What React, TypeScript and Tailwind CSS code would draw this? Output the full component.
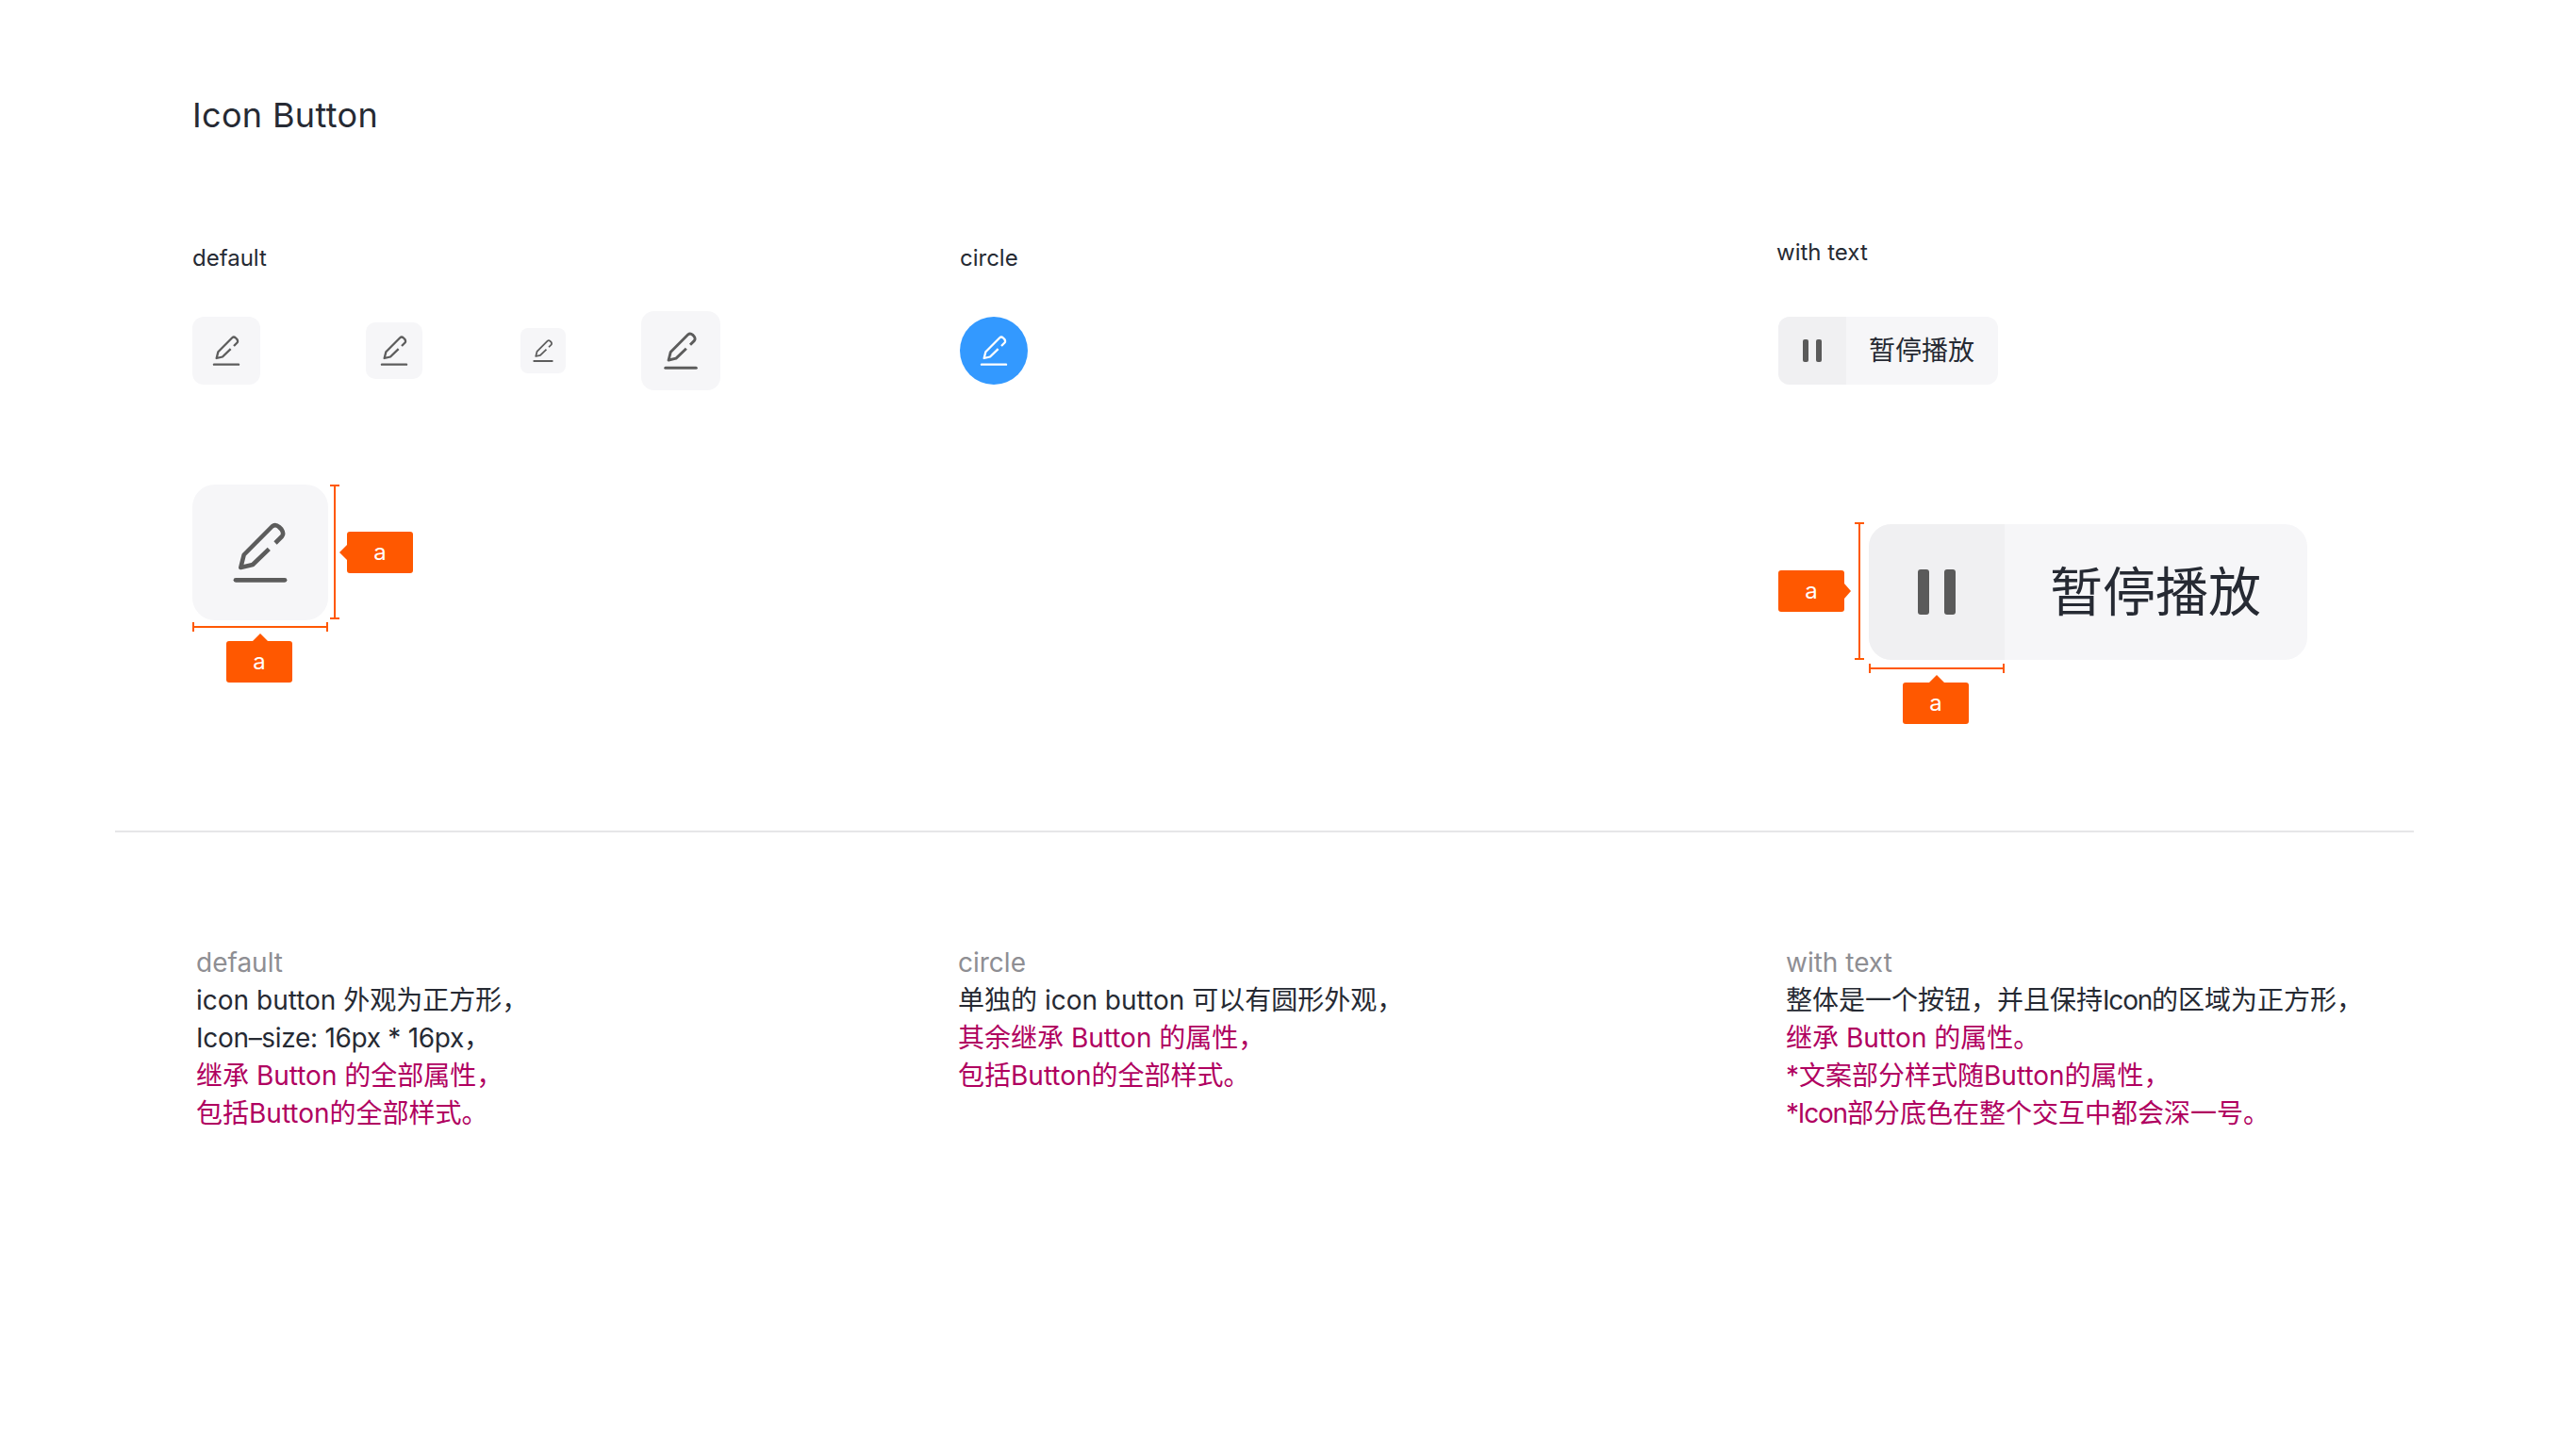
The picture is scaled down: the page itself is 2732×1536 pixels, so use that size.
const font = "font-['Inter','Noto_Sans_CJK_SC',sans-serif]";

function PenIcon({ size, color = "#5c5c5c" }: { size: number; color?: string }) {
  return (
    <svg width={size} height={size} viewBox="40 40 64 64" fill="none" stroke={color} strokeWidth="4.6">
      <path
        d="M88 62 L95 55 Q97.5 52 94.5 47.5 L92 45 Q88 41.5 84.5 44.5 L54.7 74.5 L51.3 88 L64 85 L81.3 68.3"
        strokeLinejoin="round"
      />
      <path d="M46 101.3 H98" strokeWidth="4.8" strokeLinecap="round" />
    </svg>
  );
}

function IconButton({ box, icon }: { box: string; icon: number }) {
  return (
    <div className={`flex items-center justify-center bg-[#f6f6f8] ${box}`}>
      <PenIcon size={icon} />
    </div>
  );
}

function PauseIcon({ big }: { big?: boolean }) {
  return big ? (
    <div className="flex gap-[16px]">
      <div className="h-[48px] w-[12px] rounded-[3px] bg-[#5a5a5a]" />
      <div className="h-[48px] w-[12px] rounded-[3px] bg-[#5a5a5a]" />
    </div>
  ) : (
    <div className="flex gap-[8px]">
      <div className="h-[24px] w-[6px] rounded-[2px] bg-[#5a5a5a]" />
      <div className="h-[24px] w-[6px] rounded-[2px] bg-[#5a5a5a]" />
    </div>
  );
}

// orange size marker, the arrow sits on one side
function Tag({ className, arrow }: { className: string; arrow: "left" | "top" | "right" }) {
  return (
    <div className={`absolute flex h-[44px] w-[70px] items-center justify-center rounded-[3px] bg-[#ff5800] text-[24px] text-white ${className}`}>
      a
      {arrow === "left" && <span className="absolute left-[-8px] top-[14px] h-0 w-0 border-y-[8px] border-r-[8px] border-y-transparent border-r-[#ff5800]" />}
      {arrow === "right" && <span className="absolute right-[-7px] top-[14px] h-0 w-0 border-y-[8px] border-l-[7px] border-y-transparent border-l-[#ff5800]" />}
      {arrow === "top" && <span className="absolute left-[28px] top-[-8px] h-0 w-0 border-x-[8px] border-b-[8px] border-x-transparent border-b-[#ff5800]" />}
    </div>
  );
}

function VLine({ className }: { className: string }) {
  return (
    <div className={`absolute w-[10px] border-y-2 border-[#ff5800] ${className}`}>
      <div className="mx-auto h-full w-[2px] bg-[#ff5800]" />
    </div>
  );
}

function HLine({ className }: { className: string }) {
  return (
    <div className={`absolute flex h-[10px] items-center border-x-2 border-[#ff5800] ${className}`}>
      <div className="h-[2px] w-full bg-[#ff5800]" />
    </div>
  );
}

export default function App() {
  return (
    <div className={`h-[1536px] w-[2732px] overflow-hidden bg-white pt-[98px] text-[#262a33] ${font}`}>
      <h1 className="pl-[204px] text-[36px] font-normal leading-[48px] tracking-[0.35px]">Icon Button</h1>

      <div className="mt-[105px] grid h-[630px] grid-cols-[814px_867px_1fr] pl-[204px]">
        <div className="pt-[7px]">
          <p className="text-[24px] leading-[32px]">default</p>
          <div className="mt-[40px] flex h-[84px] items-center">
            <IconButton box="h-[72px] w-[72px] rounded-[12px]" icon={32} />
            <IconButton box="ml-[112px] h-[60px] w-[60px] rounded-[10px]" icon={32} />
            <IconButton box="ml-[104px] h-[48px] w-[48px] rounded-[8px]" icon={24} />
            <IconButton box="ml-[80px] h-[84px] w-[84px] rounded-[14px]" icon={40} />
          </div>
          <div className="relative mt-[100px] h-[144px] w-[144px]">
            <IconButton box="h-[144px] w-[144px] rounded-[24px]" icon={64} />
            <VLine className="left-[146px] top-0 h-[143px]" />
            <Tag className="left-[164px] top-[50px]" arrow="left" />
            <HLine className="left-0 top-[146px] w-[144px]" />
            <Tag className="left-[36px] top-[166px]" arrow="top" />
          </div>
        </div>

        <div className="pt-[7px]">
          <p className="text-[24px] leading-[32px]">circle</p>
          <div className="mt-[40px] flex h-[84px] items-center">
            <div className="flex h-[72px] w-[72px] items-center justify-center rounded-full bg-[#3399ff]">
              <PenIcon size={32} color="#ffffff" />
            </div>
          </div>
        </div>

        <div>
          <p className="-ml-[1px] mt-[1px] text-[24px] leading-[32px]">with text</p>
          <div className="ml-[1px] mt-[52px] flex h-[72px] w-[233px] overflow-hidden rounded-[12px] bg-[#f6f6f8]">
            <div className="flex w-[72px] items-center justify-center bg-[#f0f0f2]">
              <PauseIcon />
            </div>
            <span className="pl-[24px] text-[28px] leading-[72px]">暂停播放</span>
          </div>
          <div className="relative ml-[97px] mt-[148px] h-[144px] w-[465px]">
            <div className="flex h-[144px] overflow-hidden rounded-[24px] bg-[#f6f6f8]">
              <div className="flex w-[144px] items-center justify-center bg-[#f0f0f2]">
                <PauseIcon big />
              </div>
              <span className="pl-[48px] text-[56px] leading-[144px]">暂停播放</span>
            </div>
            <VLine className="left-[-15px] top-[-2px] h-[146px]" />
            <Tag className="left-[-96px] top-[49px]" arrow="right" />
            <HLine className="left-0 top-[148px] w-[144px]" />
            <Tag className="left-[36px] top-[168px]" arrow="top" />
          </div>
        </div>
      </div>

      <div className="ml-[122px] h-[2px] w-[2438px] bg-[#e6e6e8]" />

      <div className="mt-[118px] grid grid-cols-[808px_878px_1fr] pl-[208px] text-[28px] leading-[40px]">
        <div>
          <p className="text-[#8e8e93]">default</p>
          <p>icon button 外观为正方形，</p>
          <p className="tracking-[-0.3px]">Icon–size: 16px * 16px，</p>
          <p className="text-[#b00060]">继承 Button 的全部属性，</p>
          <p className="text-[#b00060]">包括Button的全部样式。</p>
        </div>
        <div>
          <p className="text-[#8e8e93]">circle</p>
          <p>单独的 icon button 可以有圆形外观，</p>
          <p className="text-[#b00060]">其余继承 Button 的属性，</p>
          <p className="text-[#b00060]">包括Button的全部样式。</p>
        </div>
        <div>
          <p className="text-[#8e8e93]">with text</p>
          <p>整体是一个按钮，并且保持<span className="tracking-[-1.2px]">Icon</span>的区域为正方形，</p>
          <p className="text-[#b00060]">继承 Button 的属性。</p>
          <p className="text-[#b00060]">*文案部分样式随Button的属性，</p>
          <p className="text-[#b00060]"><span className="tracking-[-1.2px]">*Icon</span>部分底色在整个交互中都会深一号。</p>
        </div>
      </div>
    </div>
  );
}
